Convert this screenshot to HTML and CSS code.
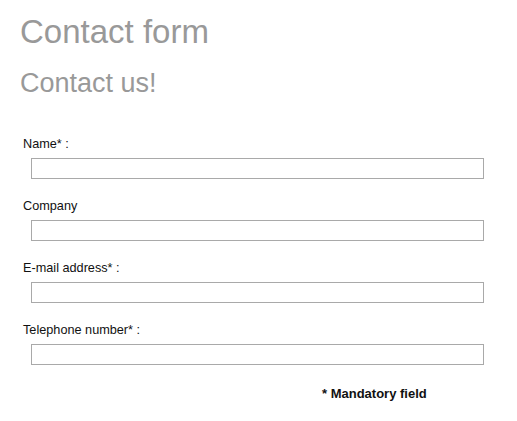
FILE: index.html
```html
<!DOCTYPE html>
<html>
<head>
<meta charset="utf-8">
<link rel="stylesheet" href="styles.css">
</head>
<body>
<div class="page">
  <h1 class="title">Contact form</h1>
  <h2 class="subtitle">Contact us!</h2>
  <form class="form">
    <div class="field">
      <label class="label">Name* :</label>
      <input class="input" type="text">
    </div>
    <div class="field">
      <label class="label">Company</label>
      <input class="input" type="text">
    </div>
    <div class="field">
      <label class="label">E-mail address* :</label>
      <input class="input" type="text">
    </div>
    <div class="field">
      <label class="label">Telephone number* :</label>
      <input class="input" type="text">
    </div>
    <div class="note">* Mandatory field</div>
  </form>
</div>
</body>
</html>
```
FILE: styles.css
```css
html, body {
  margin: 0;
  padding: 0;
  background: #fff;
}
.page {
  font-family: "Liberation Sans", Arial, sans-serif;
  padding-top: 12px;
}
.title {
  margin: 0 0 0 20px;
  font-size: 33px;
  line-height: 40px;
  font-weight: normal;
  color: #999;
}
.subtitle {
  margin: 15px 0 0 20px;
  font-size: 27px;
  line-height: 32px;
  font-weight: normal;
  color: #999;
}
.form {
  margin: 37px 0 0 0;
  display: flex;
  flex-direction: column;
}
.field {
  display: flex;
  flex-direction: column;
  margin-bottom: 19px;
}
.label {
  margin-left: 23px;
  padding-top: 1px;
  font-size: 12.7px;
  line-height: 15px;
  color: #111;
}
.input {
  box-sizing: border-box;
  margin: 6px 0 0 31px;
  width: 453px;
  height: 21px;
  border: 1px solid #a9a9a9;
  padding: 0;
  background: #fff;
}
.note {
  margin: 2px 0 0 322px;
  font-size: 13px;
  line-height: 15px;
  font-weight: bold;
  color: #111;
}
```
